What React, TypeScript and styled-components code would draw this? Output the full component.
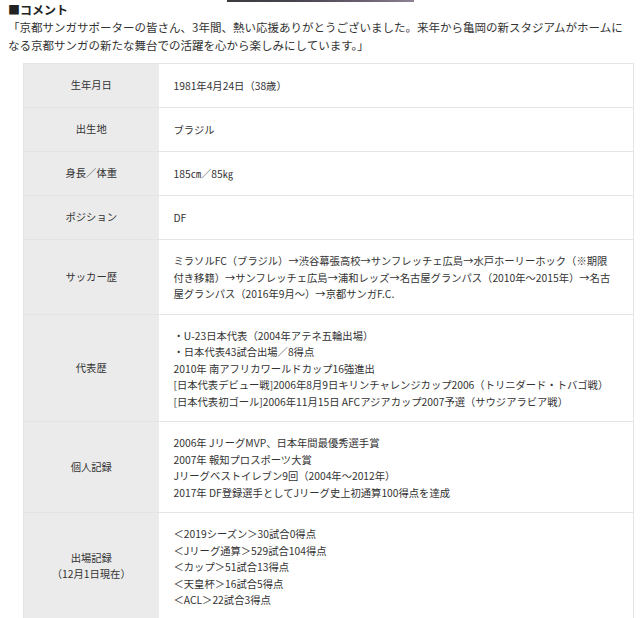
import React from "react";
import styled, { createGlobalStyle } from "styled-components";

const Global = createGlobalStyle`
  html, body { margin: 0; padding: 0; background: #fff; }
  body { font-family: "Noto Sans CJK JP", "Noto Sans", sans-serif; color: #333; }
`;

const Page = styled.div`
  padding: 0 8px;
`;

const PhotoEdge = styled.div`
  width: 187px;
  height: 2px;
  margin: 0 auto;
  background: linear-gradient(90deg, #3d3a3f 0%, #4a4550 40%, #6c6272 75%, #8d8294 100%);
`;

const Heading = styled.div`
  font-size: 12px;
  font-weight: 700;
  line-height: 16px;
  color: #222;
`;

const Comment = styled.p`
  margin: 0;
  font-size: 11.5px;
  line-height: 18px;
  color: #333;
`;

const Table = styled.table`
  margin: 9px 0 0 15px;
  width: 611px;
  border-collapse: collapse;
  border: 1px solid #e4e4e4;
  font-size: 10.3px;
  line-height: 16.5px;
`;

const Row = styled.tr`
  height: 44px;
  border-bottom: 1px solid #e4e4e4;
`;

const Label = styled.th`
  width: 135px;
  box-sizing: border-box;
  background: #ebebeb;
  font-weight: 400;
  text-align: center;
  vertical-align: middle;
  padding: 12px 8px;
  color: #333;
`;

const Value = styled.td`
  background: #fff;
  text-align: left;
  vertical-align: middle;
  padding: 13px 10px 11px 15px;
  color: #333;
`;

type Item = { label: React.ReactNode; lines: string[] };

const items: Item[] = [
  { label: "生年月日", lines: ["1981年4月24日（38歳）"] },
  { label: "出生地", lines: ["ブラジル"] },
  { label: "身長／体重", lines: ["185㎝／85㎏"] },
  { label: "ポジション", lines: ["DF"] },
  {
    label: "サッカー歴",
    lines: [
      "ミラソルFC（ブラジル）→渋谷幕張高校→サンフレッチェ広島→水戸ホーリーホック（※期限",
      "付き移籍）→サンフレッチェ広島→浦和レッズ→名古屋グランパス（2010年～2015年）→名古",
      "屋グランパス（2016年9月～）→京都サンガF.C.",
    ],
  },
  {
    label: "代表歴",
    lines: [
      "・U-23日本代表（2004年アテネ五輪出場）",
      "・日本代表43試合出場／8得点",
      "2010年 南アフリカワールドカップ16強進出",
      "[日本代表デビュー戦]2006年8月9日キリンチャレンジカップ2006（トリニダード・トバゴ戦）",
      "[日本代表初ゴール]2006年11月15日 AFCアジアカップ2007予選（サウジアラビア戦）",
    ],
  },
  {
    label: "個人記録",
    lines: [
      "2006年 JリーグMVP、日本年間最優秀選手賞",
      "2007年 報知プロスポーツ大賞",
      "Jリーグベストイレブン9回（2004年～2012年）",
      "2017年 DF登録選手としてJリーグ史上初通算100得点を達成",
    ],
  },
  {
    label: (
      <>
        出場記録
        <br />
        （12月1日現在）
      </>
    ),
    lines: [
      "＜2019シーズン＞30試合0得点",
      "＜Jリーグ通算＞529試合104得点",
      "＜カップ＞51試合13得点",
      "＜天皇杯＞16試合5得点",
      "＜ACL＞22試合3得点",
    ],
  },
];

export default function App() {
  return (
    <>
      <Global />
      <Page>
        <PhotoEdge />
        <Heading>■コメント</Heading>
        <Comment>
          「京都サンガサポーターの皆さん、3年間、熱い応援ありがとうございました。来年から亀岡の新スタジアムがホームになる京都サンガの新たな舞台での活躍を心から楽しみにしています。」
        </Comment>
        <Table>
          <tbody>
            {items.map((it, i) => (
              <Row key={i}>
                <Label>{it.label}</Label>
                <Value>
                  {it.lines.map((l, j) => (
                    <React.Fragment key={j}>
                      {j > 0 && <br />}
                      {l}
                    </React.Fragment>
                  ))}
                </Value>
              </Row>
            ))}
          </tbody>
        </Table>
      </Page>
    </>
  );
}
